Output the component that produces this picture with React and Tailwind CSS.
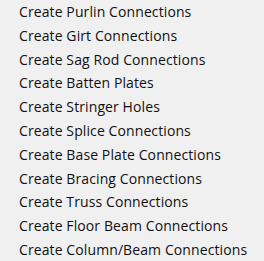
const items = [
  'Create Purlin Connections',
  'Create Girt Connections',
  'Create Sag Rod Connections',
  'Create Batten Plates',
  'Create Stringer Holes',
  'Create Splice Connections',
  'Create Base Plate Connections',
  'Create Bracing Connections',
  'Create Truss Connections',
  'Create Floor Beam Connections',
  'Create Column/Beam Connections',
];

export default function App() {
  return (
    <div className="w-[264px] h-[261px] bg-[#f0f0f0] overflow-hidden">
      <ul className="flex flex-col pl-[19px] text-[14px] tracking-[0.1px] text-[#111] font-['Open_Sans',sans-serif]">
        {items.map((item) => (
          <li key={item} className="h-[23.8px] leading-[23px] whitespace-nowrap">
            {item}
          </li>
        ))}
      </ul>
    </div>
  );
}
